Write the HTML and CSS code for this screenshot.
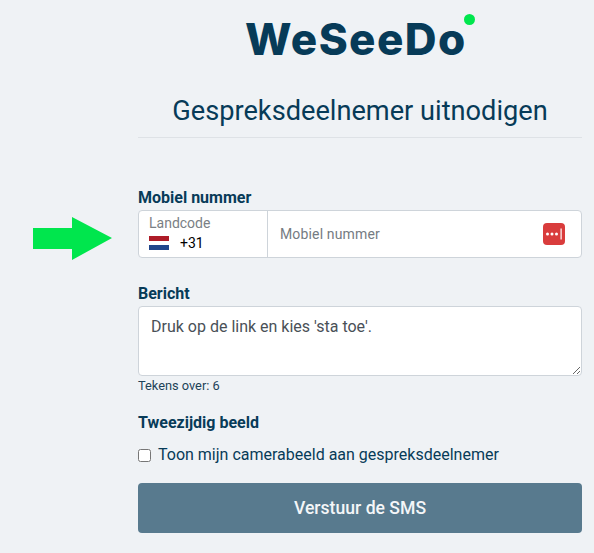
FILE: index.html
```html
<!DOCTYPE html>
<html lang="en">
<head>
  <meta charset="UTF-8">
  <meta name="viewport" content="width=device-width, initial-scale=1.0">
  <title>Gespreksdeelnemer uitnodigen</title>
  <link rel="stylesheet" href="styles.css">
</head>
<body>

<div class="page">
  <svg class="arrow" width="80" height="44" viewBox="0 0 80 44"><polygon fill="#00e64d" points="0,11 39,11 39,0 79,21 39,43 39,32 0,32"/></svg>

  <div class="logo"><span class="logo-text">WeSeeDo</span><span class="logo-dot"></span></div>

  <h2 class="heading">Gespreksdeelnemer uitnodigen</h2>

  <form class="form" onsubmit="event.preventDefault();">
    <label class="field-label">Mobiel nummer</label>
    <div class="phone">
      <div class="country">
        <span class="country-label">Landcode</span>
        <div class="country-value">
          <span class="flag"><i class="red"></i><i class="white"></i><i class="blue"></i></span>
          <span class="code">+31</span>
        </div>
      </div>
      <input class="phone-input" type="text" placeholder="Mobiel nummer">
      <svg class="pw-icon" width="22" height="22" viewBox="0 0 22 22">
        <rect width="22" height="22" rx="4" fill="#d93c3c"/>
        <circle cx="4.5" cy="11" r="1.5" fill="#fff"/>
        <circle cx="9" cy="11" r="1.5" fill="#fff"/>
        <circle cx="13.5" cy="11" r="1.5" fill="#fff"/>
        <rect x="17.5" y="5.5" width="1.2" height="11" fill="#fff"/>
      </svg>
    </div>

    <label class="field-label message-label">Bericht</label>
    <textarea class="message">Druk op de link en kies 'sta toe'.</textarea>
    <p class="counter">Tekens over: 6</p>

    <label class="field-label twoway-label">Tweezijdig beeld</label>
    <label class="check-row">
      <input type="checkbox">
      <span>Toon mijn camerabeeld aan gespreksdeelnemer</span>
    </label>

    <button class="send" type="submit">Verstuur de SMS</button>
  </form>
</div>

</body>
</html>
```

FILE: styles.css
```css
* {
  margin: 0;
  padding: 0;
  box-sizing: border-box;
  font-family: Roboto, sans-serif;
}

body {
  background: #eff2f5;
  color: #073b58;
  overflow: hidden;
}

.page {
  position: relative;
  height: 553px;
  padding: 0 12px 0 138px;
}

.arrow {
  position: absolute;
  left: 33px;
  top: 217px;
}

.logo {
  position: relative;
  width: 230px;
  height: 66px;
  margin-left: 107px;
  padding-top: 12px;
}

.logo-text {
  font-family: "Inter", sans-serif;
  font-weight: 800;
  font-size: 44px;
  line-height: 54px;
  letter-spacing: 1.4px;
  color: #073b58;
}

.logo-dot {
  position: absolute;
  left: 219px;
  top: 14px;
  width: 11px;
  height: 11px;
  border-radius: 50%;
  background: #00e64d;
}

.heading {
  margin-top: 12px;
  height: 60px;
  padding-top: 18px;
  font-size: 27.2px;
  line-height: 30px;
  font-weight: 400;
  text-align: center;
  border-bottom: 1px solid #dee2e6;
}

.form {
  display: flex;
  flex-direction: column;
}

.field-label {
  display: block;
  font-size: 16px;
  line-height: 20px;
  font-weight: 700;
  color: #073b58;
}

.form > .field-label:first-child {
  margin-top: 50px;
  margin-bottom: 2px;
}

.phone {
  display: flex;
  align-items: center;
  height: 48px;
  background: #fff;
  border: 1px solid #ced4da;
  border-radius: 4px;
}

.country {
  width: 129px;
  height: 100%;
  padding: 4px 0 0 10px;
  border-right: 1px solid #ced4da;
}

.country-label {
  display: block;
  font-size: 14px;
  line-height: 16px;
  color: #7a7f85;
}

.country-value {
  display: flex;
  align-items: center;
  gap: 11px;
  margin-top: 3px;
}

.flag {
  display: flex;
  flex-direction: column;
  width: 20px;
  height: 14px;
}

.flag i {
  flex: 1;
}

.flag .red { background: #ae1c28; }
.flag .white { background: #fff; }
.flag .blue { background: #21468b; }

.code {
  font-size: 14px;
  line-height: 18px;
  color: #000;
}

.phone-input {
  flex: 1;
  min-width: 0;
  height: 100%;
  padding-left: 12px;
  border: none;
  background: transparent;
  font-size: 14px;
}

.phone-input::placeholder {
  color: #757b82;
  letter-spacing: 0.15px;
}

.pw-icon {
  margin-right: 16px;
  flex-shrink: 0;
}

.message-label {
  margin-top: 26px;
  margin-bottom: 2px;
}

.message {
  height: 70px;
  padding: 8px 12px;
  border: 1px solid #ced4da;
  border-radius: 4px;
  background: #fff;
  font-size: 16px;
  line-height: 24px;
  color: #495057;
}

.counter {
  margin-top: 2px;
  font-size: 12.8px;
  line-height: 16px;
  color: #1d4258;
}

.twoway-label {
  margin-top: 19px;
}

.check-row {
  display: flex;
  align-items: center;
  gap: 7px;
  margin-top: 11px;
  font-size: 16px;
  line-height: 22px;
}

.check-row input {
  width: 13px;
  height: 13px;
}

.send {
  height: 50px;
  margin-top: 17px;
  border: none;
  border-radius: 4px;
  background: #587a8e;
  color: #f4f6f8;
  font-size: 17.6px;
  font-weight: 500;
  cursor: pointer;
}
```
